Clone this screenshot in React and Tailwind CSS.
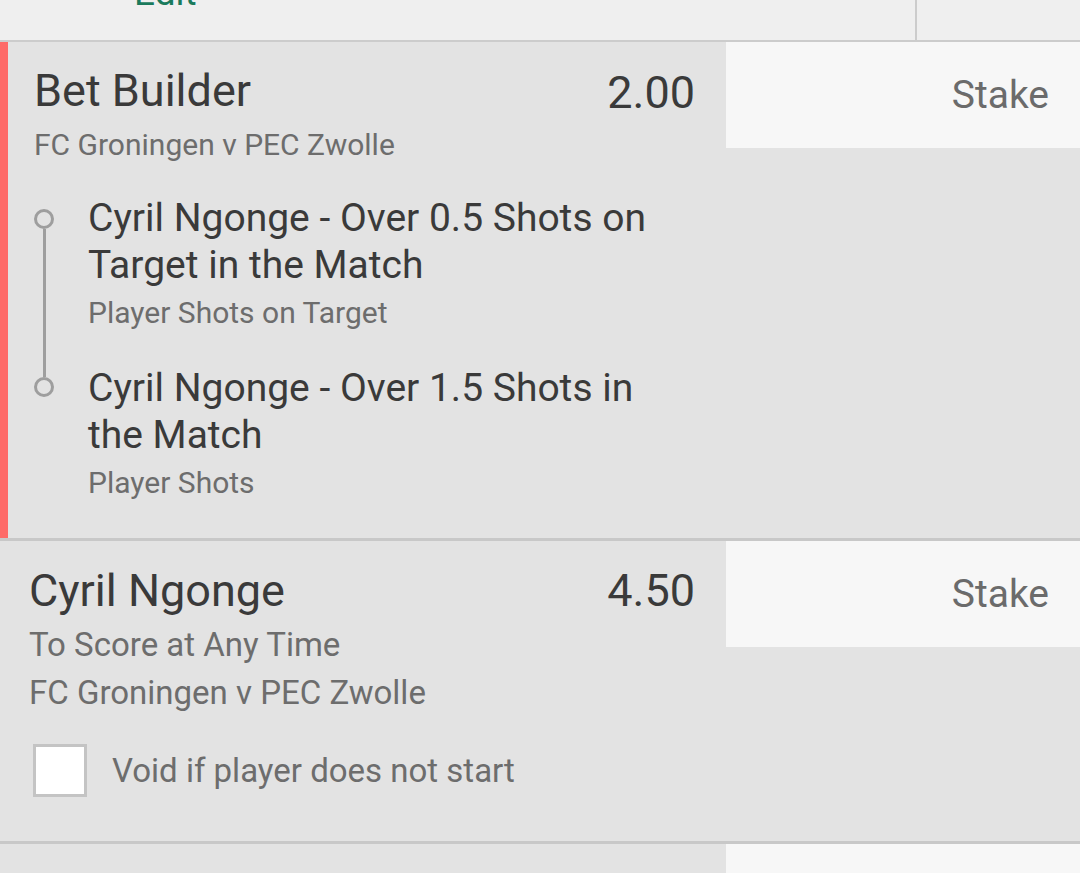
import React from "react";

const font = { fontFamily: "Roboto, 'Noto Sans', sans-serif" };

function StakeBox() {
  return (
    <div className="w-[354px] shrink-0">
      <div className="h-[106px] bg-[#f7f7f7] flex items-start justify-end pr-[31px] pt-[29px]">
        <span className="text-[39px] leading-[48px] text-[#6b6b6b]">Stake</span>
      </div>
    </div>
  );
}

export default function App() {
  return (
    <div style={font} className="w-[1080px] h-[873px] overflow-hidden bg-[#e3e3e3]">
      {/* top bar */}
      <div className="h-[40px] bg-[#efefef] flex overflow-hidden">
        <div className="w-[915px] pl-[134px]">
          <div className="mt-[-25px] text-[37px] leading-[36px] text-[#1a7a5c]">Edit</div>
        </div>
        <div className="w-[2px] bg-[#cccccc]" />
        <div className="flex-1" />
      </div>
      <div className="h-[2px] bg-[#cccccc]" />

      {/* Bet builder card */}
      <div className="flex">
        <div className="w-[8px] bg-[#fe6a68] shrink-0" />
        <div className="flex-1 pl-[26px] pr-[31px] pt-[23px] pb-[37px]">
          <div className="flex justify-between items-start">
            <div className="text-[45px] leading-[52px] text-[#3a3a3a]">Bet Builder</div>
            <div className="text-[45px] leading-[52px] text-[#3a3a3a] mt-[2px]">2.00</div>
          </div>
          <div className="mt-[8px] text-[30px] leading-[36px] text-[#6d6d6d]">FC Groningen v PEC Zwolle</div>

          <div className="mt-[32px] flex flex-col">
            {/* selection 1 */}
            <div className="flex">
              <div className="w-[54px] shrink-0 flex flex-col">
                <div className="mt-[14px] w-[20px] h-[20px] rounded-full border-[3px] border-[#9e9e9e]" />
                <div className="ml-[8.5px] w-[3px] flex-1 bg-[#9e9e9e]" />
              </div>
              <div className="flex-1 pb-[34px]">
                <div className="text-[39px] leading-[47px] text-[#3a3a3a]">
                  Cyril Ngonge - Over 0.5 Shots on<br />Target in the Match
                </div>
                <div className="mt-[6px] text-[30px] leading-[36px] text-[#6d6d6d]">Player Shots on Target</div>
              </div>
            </div>
            {/* selection 2 */}
            <div className="flex">
              <div className="w-[54px] shrink-0 flex flex-col">
                <div className="ml-[8.5px] w-[3px] h-[12px] bg-[#9e9e9e]" />
                <div className="w-[20px] h-[20px] rounded-full border-[3px] border-[#9e9e9e]" />
              </div>
              <div className="flex-1">
                <div className="text-[39px] leading-[47px] text-[#3a3a3a]">
                  Cyril Ngonge - Over 1.5 Shots in<br />the Match
                </div>
                <div className="mt-[6px] text-[30px] leading-[36px] text-[#6d6d6d]">Player Shots</div>
              </div>
            </div>
          </div>
        </div>
        <StakeBox />
      </div>
      <div className="h-[3px] bg-[#c8c8c8]" />

      {/* single card */}
      <div className="flex">
        <div className="flex-1 pl-[29px] pr-[31px] pt-[24px] pb-[44px]">
          <div className="flex justify-between items-start">
            <div className="text-[45px] leading-[52px] text-[#3a3a3a]">Cyril Ngonge</div>
            <div className="text-[45px] leading-[52px] text-[#3a3a3a]">4.50</div>
          </div>
          <div className="mt-[4px] text-[33px] leading-[48px] text-[#6d6d6d]">To Score at Any Time</div>
          <div className="text-[33px] leading-[48px] text-[#6d6d6d]">FC Groningen v PEC Zwolle</div>
          <div className="mt-[27px] flex items-center gap-[25px]">
            <div className="ml-[4px] w-[54px] h-[53px] bg-white border-[3px] border-[#c4c4c4]" />
            <div className="text-[33px] leading-[40px] text-[#6d6d6d]">Void if player does not start</div>
          </div>
        </div>
        <StakeBox />
      </div>
      <div className="h-[3px] bg-[#c8c8c8]" />

      {/* next card */}
      <div className="flex h-[200px]">
        <div className="flex-1" />
        <div className="w-[354px] bg-[#f7f7f7]" />
      </div>
    </div>
  );
}
